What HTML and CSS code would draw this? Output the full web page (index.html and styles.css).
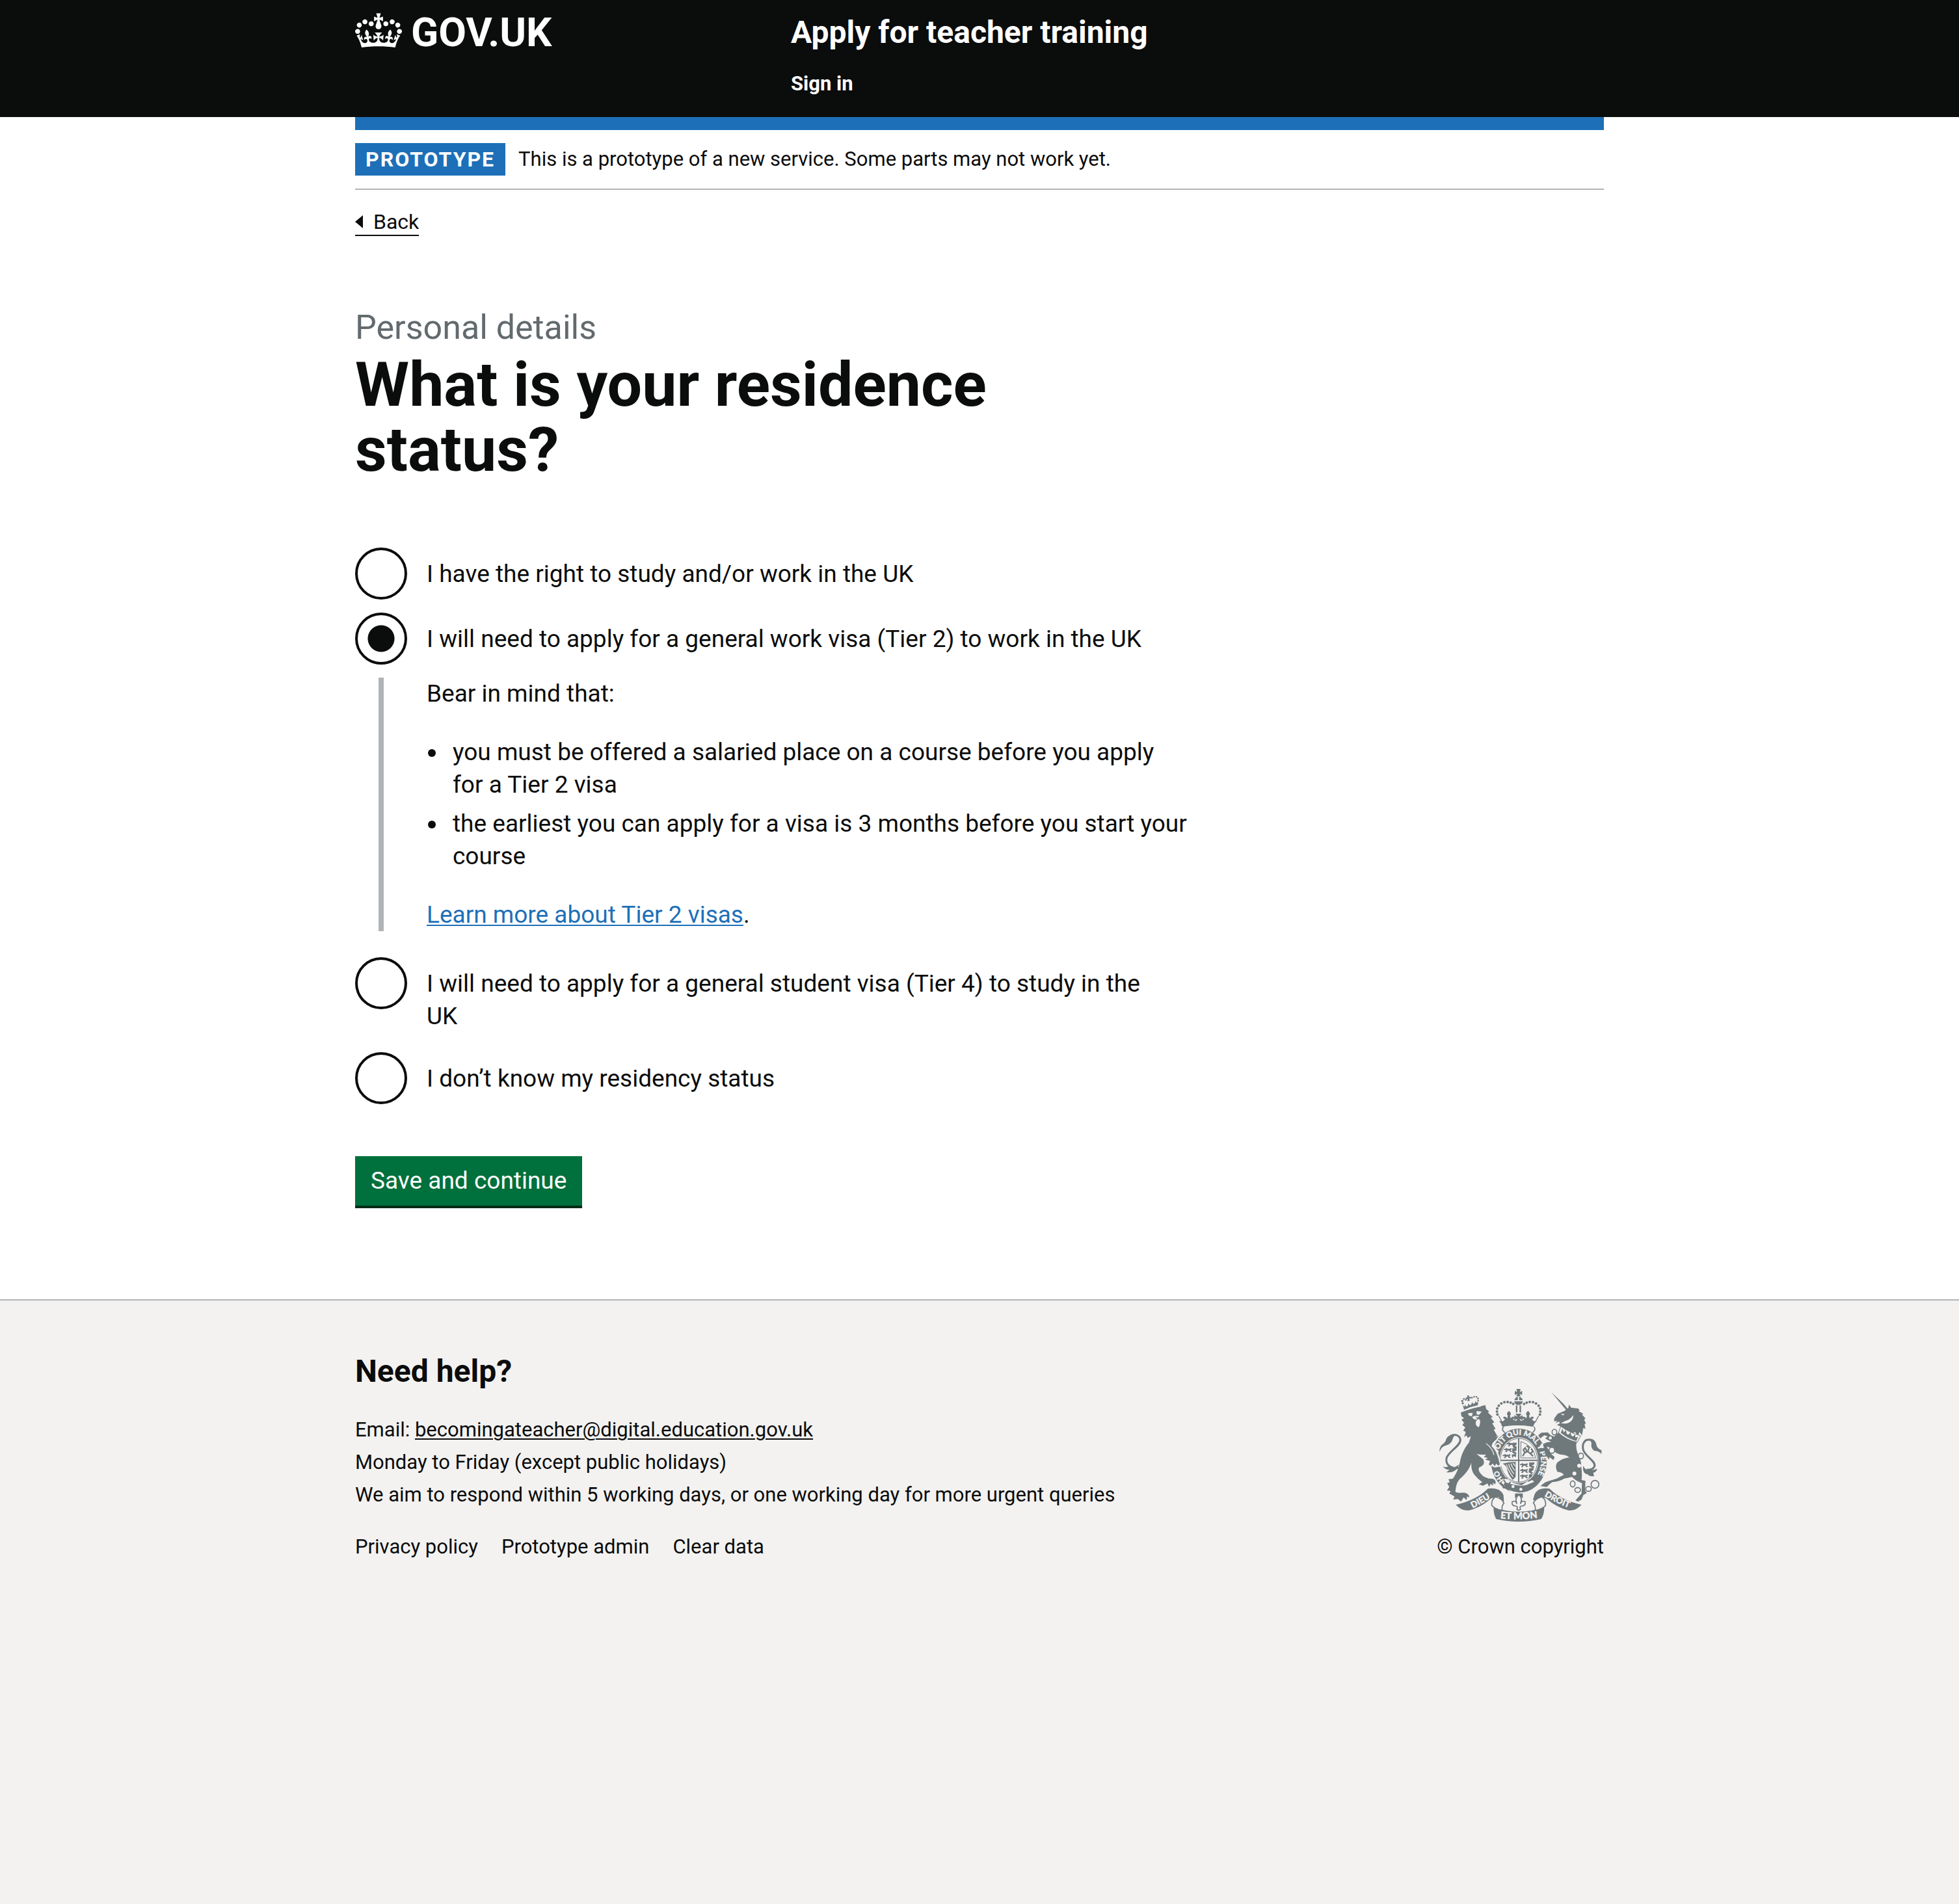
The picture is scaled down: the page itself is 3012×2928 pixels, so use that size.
FILE: index.html
```html
<!DOCTYPE html>
<html lang="en">
<head>
<meta charset="utf-8">
<meta name="viewport" content="width=device-width, initial-scale=1">
<title>What is your residence status? - Apply for teacher training</title>
<link rel="stylesheet" href="styles.css">
</head>
<body>
<header class="header">
  <div class="container header-row">
    <a class="logo" href="#">
      <svg class="crown" viewBox="0 0 132 97" aria-hidden="true"><path fill="currentColor" fill-rule="evenodd" d="M25 30.2c3.5 1.5 7.7-.2 9.1-3.7 1.5-3.6-.2-7.8-3.9-9.2-3.6-1.4-7.6.3-9.1 3.9-1.4 3.5.3 7.5 3.9 9zM9 39.5c3.6 1.5 7.8-.2 9.2-3.7 1.5-3.6-.2-7.8-3.9-9.1-3.6-1.5-7.6.2-9.1 3.8-1.4 3.5.3 7.5 3.8 9zM4.4 57.2c3.5 1.5 7.7-.2 9.1-3.8 1.5-3.6-.2-7.7-3.9-9.1-3.5-1.5-7.6.3-9.1 3.8-1.4 3.5.3 7.6 3.9 9.1zm38.3-21.4c3.5 1.5 7.7-.2 9.1-3.8 1.5-3.6-.2-7.7-3.9-9.1-3.6-1.5-7.6.3-9.1 3.8-1.3 3.6.4 7.7 3.9 9.1zm64.4-5.6c-3.6 1.5-7.8-.2-9.1-3.7-1.5-3.6.2-7.8 3.8-9.2 3.6-1.4 7.7.3 9.2 3.9 1.3 3.5-.4 7.5-3.9 9zm15.9 9.3c-3.6 1.5-7.7-.2-9.1-3.7-1.5-3.6.2-7.8 3.7-9.1 3.6-1.5 7.7.2 9.2 3.8 1.5 3.5-.3 7.5-3.8 9zm4.7 17.7c-3.6 1.5-7.8-.2-9.2-3.8-1.5-3.6.2-7.7 3.9-9.1 3.6-1.5 7.7.3 9.2 3.8 1.3 3.5-.4 7.6-3.9 9.1zM89.3 35.8c-3.6 1.5-7.8-.2-9.2-3.8-1.4-3.6.2-7.7 3.9-9.1 3.6-1.5 7.7.3 9.2 3.8 1.4 3.6-.3 7.7-3.9 9.1zM69.7 17.7l8.9 4.7V9.3l-8.9 2.8c-.2-.3-.5-.6-.9-.9L72.4 0H59.6l3.5 11.2c-.3.3-.6.5-.9.9l-8.8-2.8v13.1l8.8-4.7c.3.3.6.7.9.9l-5 15.4v.1c-.2.8-.4 1.6-.4 2.4 0 4.1 3.1 7.5 7 8.1h.2c.3 0 .7.1 1 .1.4 0 .7 0 1-.1h.2c4-.6 7.1-4.1 7.1-8.1 0-.8-.1-1.7-.4-2.4V34l-5.1-15.4c.4-.2.7-.6 1-.9zM66 92.8c16.9 0 32.8 1.1 47.1 3.2 4-16.9 8.9-26.7 14-33.5l-9.6-3.4c1 4.9 1.1 7.2 0 10.2-1.5-1.4-3-4.3-4.2-8.7L108.6 76c2.8-2 5-3.2 7.5-3.3-4.4 9.4-10 11.9-13.6 11.2-4.3-.8-6.3-4.6-5.6-7.9 1-4.7 5.7-5.9 8-.5 4.3-8.7-3-11.4-7.6-8.8 7.1-7.2 7.9-13.5 2.1-21.1-8 6.1-8.1 12.3-4.5 20.8-4.7-5.4-12.1-2.5-9.5 6.2 3.4-5.2 7.9-2 7.2 3.1-.6 4.3-6.4 7.8-13.5 7.2-10.3-.9-10.9-8-11.2-13.8 2.5-.5 7.1 1.8 11 7.3L80.2 60c-4.1 4.4-8 5.3-12.3 5.4 1.4-4.4 8-11.6 8-11.6H55.5s6.4 7.2 7.9 11.6c-4.2-.1-8-1-12.3-5.4l1.4 16.4c3.9-5.5 8.5-7.7 10.9-7.3-.3 5.8-.9 12.8-11.1 13.8-7.2.6-12.9-2.9-13.5-7.2-.7-5 3.8-8.3 7.1-3.1 2.7-8.7-4.6-11.6-9.4-6.2 3.7-8.5 3.6-14.7-4.6-20.8-5.8 7.6-5 13.9 2.2 21.1-4.7-2.6-11.9.1-7.7 8.8 2.3-5.5 7.1-4.2 8.1.5.7 3.3-1.3 7.1-5.7 7.9-3.5.7-9-1.8-13.5-11.2 2.5.1 4.7 1.3 7.5 3.3l-4.7-15.4c-1.2 4.4-2.7 7.2-4.3 8.7-1.1-3-.9-5.3 0-10.2l-9.5 3.4c5 6.9 9.9 16.7 14 33.5 14.8-2.1 30.8-3.2 47.7-3.2z"/></svg>
      <span>GOV.UK</span>
    </a>
    <div class="header-content">
      <a class="service-name" href="#">Apply for teacher training</a>
      <nav><a class="nav-link" href="#">Sign in</a></nav>
    </div>
  </div>
</header>

<div class="page">
  <div class="container">
    <div class="phase-banner">
      <strong class="tag">PROTOTYPE</strong>
      <span>This is a prototype of a new service. Some parts may not work yet.</span>
    </div>
    <a class="back-link" href="#"><svg class="back-arrow" viewBox="0 0 12 20" aria-hidden="true"><path fill="currentColor" d="M0 10 12 0V20Z"/></svg>Back</a>

    <main class="main">
      <form>
        <fieldset class="fieldset">
          <legend class="legend">
            <span class="caption">Personal details</span>
            <h1 class="title">What is your residence status?</h1>
          </legend>
          <div class="radios">
            <div class="radio-item">
              <input class="radio" type="radio" name="status" id="status-1">
              <label class="radio-label" for="status-1">I have the right to study and/or work in the UK</label>
            </div>
            <div class="radio-item">
              <input class="radio" type="radio" name="status" id="status-2" checked>
              <label class="radio-label" for="status-2">I will need to apply for a general work visa (Tier 2) to work in the UK</label>
            </div>
            <div class="conditional">
              <p>Bear in mind that:</p>
              <ul class="list">
                <li>you must be offered a salaried place on a course before you apply for&nbsp;a Tier 2 visa</li>
                <li>the earliest you can apply for a visa is 3 months before you start your course</li>
              </ul>
              <p><a class="link" href="#">Learn more about Tier 2 visas</a>.</p>
            </div>
            <div class="radio-item">
              <input class="radio" type="radio" name="status" id="status-3">
              <label class="radio-label" for="status-3">I will need to apply for a general student visa (Tier 4) to study in the UK</label>
            </div>
            <div class="radio-item">
              <input class="radio" type="radio" name="status" id="status-4">
              <label class="radio-label" for="status-4">I don’t know my residency status</label>
            </div>
          </div>
        </fieldset>
        <button class="button" type="button">Save and continue</button>
      </form>
    </main>
  </div>
</div>

<footer class="footer">
  <div class="container footer-row">
    <div>
      <h2 class="footer-title">Need help?</h2>
      <ul>
        <li>Email: <a class="footer-email" href="#">becomingateacher@digital.education.gov.uk</a></li>
        <li>Monday to Friday (except public holidays)</li>
        <li>We aim to respond within 5 working days, or one working day for more urgent queries</li>
      </ul>
      <ul class="footer-links">
        <li><a href="#">Privacy policy</a></li>
        <li><a href="#">Prototype admin</a></li>
        <li><a href="#">Clear data</a></li>
      </ul>
    </div>
    <a class="copyright" href="#">
      <svg class="crest" viewBox="60 48 750 612" role="img" aria-label="Royal coat of arms">
        <defs>
          <path id="motto-main" d="M329 348A102 121 0 0 1 529 379A102 121 0 0 1 462 493"/>
          <path id="motto-left" d="M358 468A102 121 0 0 1 325 379"/>
          <path id="ribbon-left" d="M204 603Q255 578 306 545"/>
          <path id="ribbon-mid" d="M326 643Q426 656 528 641"/>
          <path id="ribbon-right" d="M537 538Q590 570 664 600"/>
          <path id="lion-mini" d="M0 6h7l3-5 5 4 12 1 6-4 4 5-5 4v5h5v4h-9l-3-6-9 0-2 7H6v-4l4-1-1-4-8 0z"/>
        </defs>
        <!-- crown -->
        <g class="ink">
          <path d="M415 48h20l-4 14 11-5v19l-12-6 5 12h-20l5-12-12 6V57l11 5z"/>
          <path d="M422 83v17h-16q3-13 16-17zM428 83q14 4 17 17h-17zM405 105h40q-3 17-20 17t-20-17z"/>
          <path d="M413 124h7v32h-7zM430 124h7v32h-7zM411 162h28l-9 14 14-7v24l-14-8 7 14h-24l7-14-14 8v-24l14 7z"/>
          <path d="M343 196q14 4 20-10-9 1-8-9 12-5 18 7l3-13q-10-10 5-22 15 12 5 22l3 13q6-12 18-7 1 10-8 9 5 10 26 10t26-10q-9 1-8-9 12-5 18 7l3-13q-10-10 5-22 15 12 5 22l3 13q6-12 18-7 1 10-8 9 6 14 22 10-12 10-17 26-74-12-142 0-3-14-14-26z"/>
          <circle cx="328" cy="166" r="6"/><circle cx="326" cy="152" r="6"/><circle cx="327" cy="138" r="6"/><circle cx="334" cy="125" r="6"/><circle cx="346" cy="115" r="6"/><circle cx="360" cy="109" r="6"/><circle cx="375" cy="108" r="6"/><circle cx="389" cy="111" r="6"/><circle cx="401" cy="117" r="6"/>
          <circle cx="524" cy="166" r="6"/><circle cx="526" cy="152" r="6"/><circle cx="525" cy="138" r="6"/><circle cx="518" cy="125" r="6"/><circle cx="506" cy="115" r="6"/><circle cx="492" cy="109" r="6"/><circle cx="477" cy="108" r="6"/><circle cx="463" cy="111" r="6"/><circle cx="451" cy="117" r="6"/>
        </g>
        <path class="line" stroke-width="4" d="M334 172l14 26M518 172l-14 26"/>
        <path class="line" stroke-width="5" d="M358 222Q350 226 352 238L362 250M494 222Q502 226 500 238L490 250"/>
        <!-- garter and shield -->
        <ellipse class="ink" cx="427" cy="379" rx="129" ry="148"/>
        <path class="paper" d="M357 224Q426 210 497 224L494 244Q426 216 360 244Z"/>
        <ellipse class="paper" cx="427" cy="377" rx="90" ry="106"/>
        <ellipse class="line" cx="427" cy="377" rx="86" ry="101" stroke-width="3"/>
        <path class="line" stroke-width="6" d="M426 276V480M340 377H514"/>
        <g class="ink">
          <use href="#lion-mini" x="371" y="292"/><use href="#lion-mini" x="358" y="318"/><use href="#lion-mini" x="352" y="346"/>
          <path d="M398 300l18-6v12l-8 4 10 6-4 8-14-6zM396 322h20v10l-12 4 12 6-3 8-16-8zM394 350l20-2v14l-10-4-8 8z"/>
          <use href="#lion-mini" x="432" y="388"/><use href="#lion-mini" x="432" y="414"/><use href="#lion-mini" x="432" y="440"/>
          <path d="M474 388l24-2v10l-12 4 12 6-3 8-20-8zM474 414l20-2v10l-10 6 8 6-6 6-14-8zM474 442l14-2-2 14-14 4z"/>
          <path d="M352 392q28-8 60-8v70l-14 14q-24-30-26-54-4-14-20-22z"/>
        </g>
        <path fill="none" stroke="#f3f2f1" stroke-width="4" d="M370 396q4 22 30 58M380 394q4 20 24 46M390 392q4 16 18 32M400 390l10 14"/>
        <path class="line" stroke-width="3" d="M436 290V366H504Q496 310 436 290Z"/>
        <path class="line" stroke-width="7" d="M444 358l10-16 14-6 12 10 12 12M454 342l-6-14 8-8 8 16M468 336l6-18-12-8M480 346l12-10-8-12"/>
        <path class="paper" d="M346 480L366 456Q392 484 440 492L466 474 490 484 500 500 470 534H400Z"/>
        <path class="ink" d="M362 478Q400 492 436 494 462 494 480 482L520 478Q490 524 430 526 392 522 362 504Z"/>
        <path class="paper" d="M454 484l34-16 10 8-42 16z"/>
        <path class="line" stroke-width="6" d="M374 462q-16-8-18 6 14 10 4 22-10 4-4 14 14 2 18-8M364 482q18 10 24-6"/>
        <circle class="paper" cx="400" cy="498" r="7"/><circle class="paper" cx="436" cy="511" r="7"/>
        <g class="motto">
          <text font-size="35"><textPath href="#motto-main">SOIT QUI MAL Y PENSE</textPath></text>
          <text font-size="33"><textPath href="#motto-left">HO</textPath></text>
        </g>
        <!-- lion -->
        <path class="halo" d="M276 140L290 152 306 178 312 200 318 228 326 262 332 264 304 300C322 330 334 360 340 400L316 404 290 392 272 372Z"/>
        <path class="line" stroke-width="9" d="M150 412C112 418 88 396 93 368C98 340 156 312 157 284C156 260 130 254 112 264"/>
        <path class="ink" d="M61 330C64 300 84 304 90 284 96 262 120 256 132 262 118 274 124 290 108 300 96 312 72 304 62 338ZM76 404q14 8 22 2 14-2 30 4l24-14-14 24q-18 16-46 12 10-4 14-12-18 2-30-16z"/>
        <path class="ink" d="M159 156Q186 146 212 138T272 122L276 140 290 152 284 157 307 178 297 181 314 202 304 206 319 232 311 236 327 264 318 270 333 264 322 282Q304 294 301 312C318 326 330 352 339 396L332 402 322 392 316 404 306 392 296 402 288 396 294 380 272 374 284 366 266 362 276 350Q256 352 232 348L262 372Q272 390 258 402L242 412Q238 430 262 450C280 460 290 462 304 462Q320 466 320 480L316 488 306 480 308 494 296 486 290 500 282 484 262 494 242 488 258 478Q238 464 222 444C210 430 206 410 208 388 200 412 186 436 160 458 144 470 136 494 134 522 150 532 166 524 182 528Q198 534 198 548L188 544 186 560 172 548 160 568 146 556 124 558 130 544 106 530 112 518 95 516 106 500 96 482 108 478 102 464 122 462C140 438 150 410 156 380 162 350 176 320 196 296L206 266 190 274 186 262 174 270 182 246 170 240 180 226 166 214 174 204 162 190 174 182 162 174Z"/>
        <path class="paper" d="M192 160l22-2-4 16-14-4zM232 150l24 2-14 16-10-4zM212 176q16-8 32-2-12 10 4 18 2 18-6 32-16-2-14-26l8-10q-20 4-24-12z"/>
        <path class="ink" d="M228 178l18 2-10 10z"/>
        <path fill="none" stroke="#f3f2f1" stroke-width="4" d="M276 300q30 22 36 52M162 153Q204 134 252 127"/>
        <g class="ink">
          <path d="M174 144l-6-22 8 8 3-10 5 9 8-4 2-12 6 10 8-4 3-12 5 10 8-4 3-10 4 8 8-4-1 16q-34 6-64 21z"/>
          <path d="M188 78l10 0-2 8 8-3 1 9-8 0 4 10-12 2 2-10-9 2-1-9 9 1z"/>
          <circle cx="168" cy="114" r="5"/><circle cx="166" cy="103" r="5"/><circle cx="173" cy="94" r="4"/><circle cx="182" cy="98" r="4"/><circle cx="210" cy="88" r="4"/><circle cx="220" cy="84" r="4"/><circle cx="231" cy="84" r="4"/><circle cx="238" cy="92" r="4"/><circle cx="239" cy="102" r="4"/>
        </g>
        <!-- unicorn -->
        <path class="halo" d="M556 262L522 256 536 276 554 280 536 310 560 320 584 370 600 340Z"/>
        <path class="line" stroke-width="9" d="M756 284C732 276 716 300 724 330 736 362 782 380 776 404Q768 424 740 420"/>
        <path class="ink" d="M748 278q28-4 36 24 2 20 24 28l0 18q-14-16-32-14-20-14-14-34-2-14-14-22zM724 402q8 22 32 20 14 2 32-6-2 14-18 18l4 16q-20 4-30-8-26-4-20-40z"/>
        <path class="ink" d="M576 62L634 118 654 142 644 144ZM590 184L606 162 636 150 655 136 658 120 668 134 700 138 708 146 702 150 724 162 718 166 734 184 728 190 736 206 730 210 734 232 724 228 718 262 706 246 700 268 686 246 672 256Q644 244 614 218L602 214 616 206 612 198 596 206 604 194 590 198Z"/>
        <path class="paper" d="M620 162l18 2-8 6zM640 196q24-6 38-28 0 34-36 40l-22-2z"/>
        <path class="ink" d="M612 246Q650 280 694 292 686 316 700 350 716 380 714 402 720 440 716 468L734 472 732 516 740 528 724 538 716 558 700 568 688 562 704 544 716 530 718 482Q690 474 672 454L634 462Q620 474 580 478L566 490 556 500 526 496 546 480 560 474 600 462 634 444Q630 434 604 430 590 400 608 384 632 366 660 364 650 352 618 350 588 342 578 320L556 314 572 344 592 362 586 376 568 362 566 374 548 348 538 302 556 294 576 292 548 276 560 266 544 262 526 276 516 262 530 250 560 248 574 262 590 268Z"/>
        <path fill="#f3f2f1" stroke="#6f787b" stroke-width="3" d="M620 220Q656 248 712 264L696 294Q646 284 610 250Z"/>
        <path class="ink" d="M620 250l8-18 6 16 10-10 4 18 8 3 9-12 4 17 8 3 9-10 2 15 12-4-8 20q-42-12-72-38z"/>
        <g fill="none" stroke="#6f787b" stroke-width="5"><ellipse cx="591" cy="247" rx="11" ry="13"/><ellipse cx="675" cy="486" rx="11" ry="14"/><ellipse cx="698" cy="514" rx="13" ry="11"/><ellipse cx="748" cy="509" rx="13" ry="11"/><circle cx="778" cy="488" r="18"/></g>
        <g fill="#f3f2f1" stroke="#6f787b" stroke-width="5"><ellipse cx="579" cy="331" rx="13" ry="14"/><ellipse cx="713" cy="357" rx="12" ry="13"/></g>
        <g class="paper"><circle cx="572" cy="274" r="7"/><circle cx="705" cy="402" r="9"/><circle cx="683" cy="438" r="9"/></g>
        <!-- ribbons and fleur-de-lis -->
        <path class="ink" d="M136 582Q230 562 284 508 340 500 356 538L358 566 330 566 336 546 300 552Q250 596 196 608 164 612 136 582ZM716 582Q622 562 568 508 512 500 498 538L492 560 524 566 526 546 552 552Q602 596 656 608 688 612 716 582ZM310 594Q426 634 544 594 544 628 530 648 426 672 322 648 310 628 310 594Z"/>
        <path fill="#f3f2f1" stroke="#6f787b" stroke-width="5" d="M318 546Q298 560 302 586 320 604 350 608 346 588 358 574 348 552 318 546ZM534 546Q554 560 550 586 532 604 502 608 506 588 494 574 504 552 534 546Z"/>
        <path class="ink" d="M409 530h36v22q-18-18-36 0z"/>
        <path fill="#f3f2f1" stroke="#6f787b" stroke-width="5" d="M427 536Q446 552 434 578 440 560 456 568 460 588 438 588L432 592 434 604 426 608 418 604 420 592 414 588Q392 588 396 568 412 560 418 578 406 552 427 536Z"/>
        <g class="motto" text-anchor="middle">
          <text font-size="40"><textPath href="#ribbon-left" startOffset="50%">DIEU</textPath></text>
          <text font-size="44"><textPath href="#ribbon-mid" startOffset="50%">ET MON</textPath></text>
          <text font-size="40"><textPath href="#ribbon-right" startOffset="50%">DROIT</textPath></text>
        </g>
      </svg>
      <span>© Crown copyright</span>
    </a>
  </div>
</footer>
</body>
</html>
```
FILE: styles.css
```css
* { box-sizing: border-box; }

body {
  margin: 0;
  min-height: 100vh;
  display: flex;
  flex-direction: column;
  background: #f3f2f1;
  color: #0b0c0c;
  font: 37px/50px Roboto, "Liberation Sans", sans-serif;
}

a { color: inherit; text-decoration: none; }
p, h1, h2, ul { margin: 0; padding: 0; }
ul { list-style: none; }

.container {
  width: calc(100% - 120px);
  max-width: 1920px;
  margin: 0 auto;
}

/* Header */
.header { background: #0b0c0c; color: #fff; }
.header-row {
  display: grid;
  grid-template-columns: 1fr 2fr;
  padding: 20px 0 26px;
}
.logo {
  display: flex;
  align-items: flex-start;
  gap: 14px;
  font-weight: 700;
  font-size: 62px;
  line-height: 60px;
}
.crown { width: 72px; height: 54px; }
.header-content { padding-left: 30px; font-weight: 700; }
.service-name { display: block; font-size: 48px; line-height: 60px; margin-bottom: 24px; }
.nav-link { display: block; font-size: 31px; }

/* Page */
.page { background: #fff; padding-bottom: 140px; }
.phase-banner {
  display: flex;
  align-items: center;
  gap: 20px;
  padding: 20px 0;
  border-top: 20px solid #1d70b8;
  border-bottom: 2px solid #b1b4b6;
  font-size: 31px;
}
.tag {
  padding: 0 16px;
  background: #1d70b8;
  color: #fff;
  font-size: 32px;
  letter-spacing: 2px;
}
.back-link {
  display: inline-flex;
  align-items: center;
  gap: 16px;
  margin-top: 29px;
  border-bottom: 2px solid #0b0c0c;
  font-size: 32px;
  line-height: 40px;
}
.back-arrow { width: 12px; height: 20px; }
.main { width: 67%; padding-top: 110px; }
.fieldset { margin: 0; padding: 0; border: 0; min-width: 0; }
.legend { padding: 0; margin-bottom: 100px; }
.caption { display: block; margin-bottom: 8px; color: #626a6e; font-size: 52px; line-height: 60px; }
.title { font-size: 95px; line-height: 100px; }

.radios { display: flex; flex-direction: column; gap: 20px; }
.radio-item { display: flex; }
.radio {
  appearance: none;
  flex: none;
  width: 80px;
  height: 80px;
  margin: 0;
  border: 4px solid #0b0c0c;
  border-radius: 50%;
}
.radio:checked { background: radial-gradient(circle, #0b0c0c 20px, transparent 21px); }
.radio-label { padding: 16px 60px 10px 30px; }
.conditional {
  margin: 0 0 20px 36px;
  padding-left: 66px;
  border-left: 8px solid #b1b4b6;
}
.list { margin: 40px 0; }
.list li { display: grid; grid-template-columns: 40px 1fr; }
.list li::before {
  content: "";
  width: 12px;
  height: 12px;
  margin: 20px 0 0 2px;
  border-radius: 50%;
  background: #0b0c0c;
}
.list li + li { margin-top: 10px; }
.link { color: #1d70b8; }
.link, .footer-email {
  text-decoration: underline;
  text-decoration-thickness: 2px;
  text-underline-offset: 3px;
}
.button {
  display: block;
  margin-top: 80px;
  padding: 18px 24px;
  border: 0;
  border-bottom: 4px solid #002d18;
  background: #00703c;
  color: #fff;
  font: inherit;
  line-height: 40px;
}

/* Footer */
.footer {
  border-top: 2px solid #b1b4b6;
  padding: 84px 0 60px;
  font-size: 31px;
}
.footer-row { display: flex; justify-content: space-between; align-items: flex-end; }
.footer-title { margin-bottom: 40px; font-size: 48px; line-height: 50px; }
.footer-links { display: flex; gap: 36px; margin-top: 30px; }
.copyright { display: flex; flex-direction: column; align-items: center; gap: 14px; }
.crest { width: 250px; height: 204px; }
.ink { fill: #6f787b; }
.paper { fill: #f3f2f1; }
.line { fill: none; stroke: #6f787b; }
.halo { fill: #f3f2f1; stroke: #f3f2f1; stroke-width: 12px; }
.motto {
  fill: #f3f2f1;
  stroke: #f3f2f1;
  stroke-width: 1px;
  font-family: Lato, "Liberation Sans", sans-serif;
  font-weight: 900;
}
```
